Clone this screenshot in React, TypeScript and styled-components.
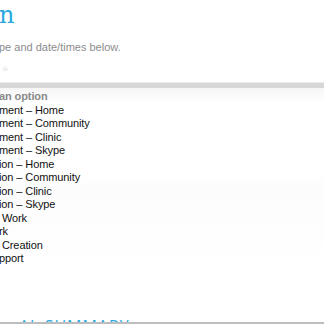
import React from "react";
import styled, { createGlobalStyle } from "styled-components";

const GlobalStyle = createGlobalStyle`
  html, body {
    margin: 0;
    padding: 0;
    background: #fff;
    overflow: hidden;
  }
`;

const options = [
  "ment – Home",
  "ment – Community",
  "ment – Clinic",
  "ment – Skype",
  "ion – Home",
  "ion – Community",
  "ion – Clinic",
  "ion – Skype",
  " Work",
  "rk",
  " Creation",
  "pport",
];

const App = () => {
  return (
    <>
      <GlobalStyle />
      <PageStyled>
        <h1 className={"title"}>n</h1>
        <p className={"intro"}>pe and date/times below.</p>
        <div className={"required"}>☆</div>
        <div className={"bar"} />
        <ul className={"options"}>
          <li className={"placeholder"}>an option</li>
          {options.map((o) => (
            <li key={o}>{o}</li>
          ))}
        </ul>
        <h2 className={"next"}>AL SUMMARY</h2>
      </PageStyled>
    </>
  );
};

const PageStyled = styled.div`
  position: relative;
  width: 324px;
  height: 324px;
  overflow: hidden;

  .title {
    margin: 0;
    height: 30px;
    font-family: "DejaVu Serif", serif;
    font-weight: normal;
    font-size: 24px;
    line-height: 30px;
    color: #29a9e1;
    text-indent: -1px;
  }

  .intro {
    margin: 8px 0 0;
    height: 18px;
    font-family: "Liberation Sans", sans-serif;
    font-size: 11px;
    line-height: 18px;
    color: #8c8c8c;
    text-indent: -1px;
  }

  .required {
    margin-top: 6px;
    height: 14px;
    font-family: "DejaVu Sans", sans-serif;
    font-size: 7px;
    line-height: 14px;
    color: #9a9a9a;
    padding-left: 2px;
  }

  .bar {
    margin-top: 6px;
    height: 5px;
    border-top: 1px solid #ececec;
    background: #d7d7d7;
  }

  .options {
    list-style: none;
    margin: 0;
    padding: 2px 0 0;
    height: 226px;
    box-sizing: border-box;
    background: linear-gradient(#f6f6f6, #fff 16px, #fff 85px, #fcfcfc 100px, #fff 180px);

    li {
      height: 13.5px;
      font-family: "Liberation Sans", sans-serif;
      font-size: 11px;
      letter-spacing: -0.1px;
      line-height: 13.5px;
      color: #111;
      white-space: pre;
      text-indent: -1px;
    }

    .placeholder {
      color: #8a8a8a;
      font-weight: bold;
    }
  }

  .next {
    margin: 2px 0 0 19px;
    font-family: "Open Sans", sans-serif;
    font-size: 16px;
    line-height: 20px;
    letter-spacing: 1px;
    font-weight: normal;
    color: #29a9e1;
  }

  &::after {
    content: "";
    position: absolute;
    left: 0;
    right: 0;
    bottom: 0;
    height: 2px;
    background: #bdbdbd;
  }
`;

export default App;
